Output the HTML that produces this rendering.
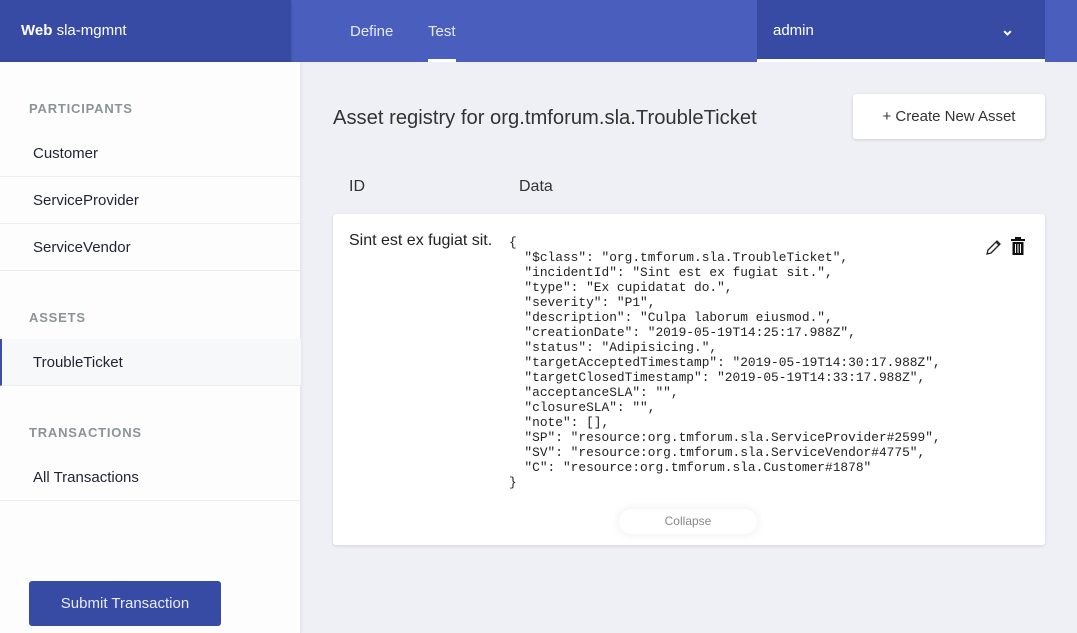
<!DOCTYPE html>
<html><head><meta charset="utf-8"><style>
*{margin:0;padding:0;box-sizing:border-box}
body{width:1077px;height:633px;overflow:hidden;background:#eff0f5;font-family:"Liberation Sans",sans-serif;position:relative;color:#1f2333}
.a{position:absolute}
.hdr{left:0;top:0;width:1077px;height:62px;background:#4a5fbd}
.side{left:0;top:62px;width:301px;height:571px;background:#fdfdfe;border-right:1px solid #e6e7ec;box-shadow:1px 0 3px rgba(0,0,0,.05)}
.lbl{font-size:13px;font-weight:bold;color:#8a9497;letter-spacing:.8px}
.item{left:0;width:301px;height:47px;border-bottom:1px solid #ebecf2;font-size:15px;padding:15px 0 0 33px;color:#1f2333}
pre{font-family:"Liberation Mono",monospace;font-size:12.85px;line-height:15px;color:#222}
</style></head><body>
<div class="a hdr"></div>
<div class="a" style="left:0;top:0;width:291px;height:62px;background:#374ba4;box-shadow:0 2px 3px rgba(0,0,0,.2)"></div>
<div class="a" style="left:21px;top:22px;color:#fff;font-size:15px"><b>Web</b> sla-mgmnt</div>
<div class="a" style="left:350px;top:23px;color:#e6e9f7;font-size:15px">Define</div>
<div class="a" style="left:428px;top:23px;color:#e6e9f7;font-size:15px">Test</div>
<div class="a" style="left:428px;top:59px;width:28px;height:3px;background:#fff"></div>
<div class="a" style="left:757px;top:0;width:288px;height:59px;background:#374ba4"></div>
<div class="a" style="left:757px;top:59px;width:288px;height:3px;background:#fff"></div>
<div class="a" style="left:773px;top:22px;color:#fff;font-size:15px">admin</div>
<svg class="a" style="left:1003px;top:30px" width="9" height="7"><path d="M1.2 1.2L4.5 4.5L7.8 1.2" stroke="#fff" stroke-width="2" fill="none"/></svg>

<div class="a side"></div>
<div class="a lbl" style="left:29px;top:101px">PARTICIPANTS</div>
<div class="a item" style="top:130px">Customer</div>
<div class="a item" style="top:177px">ServiceProvider</div>
<div class="a item" style="top:224px">ServiceVendor</div>
<div class="a lbl" style="left:29px;top:310px">ASSETS</div>
<div class="a item" style="top:339px;background:#f7f8f9;border-left:2px solid #3b4ea6;padding-left:31px">TroubleTicket</div>
<div class="a lbl" style="left:29px;top:425px">TRANSACTIONS</div>
<div class="a item" style="top:454px">All Transactions</div>
<div class="a" style="left:29px;top:581px;width:192px;height:45px;background:#374ba4;border-radius:3px;color:#e8ebf7;font-size:15px;text-align:center;line-height:45px">Submit Transaction</div>

<div class="a" style="left:333px;top:107px;font-size:20.2px;color:#333">Asset registry for org.tmforum.sla.TroubleTicket</div>
<div class="a" style="left:853px;top:94px;width:192px;height:45px;background:#fff;border-radius:3px;box-shadow:0 1px 3px rgba(0,0,0,.15);font-size:15px;text-align:center;line-height:45px;color:#333">+ Create New Asset</div>
<div class="a" style="left:349px;top:178px;font-size:16px;color:#333">ID</div>
<div class="a" style="left:519px;top:178px;font-size:16px;color:#333">Data</div>

<div class="a" style="left:333px;top:214px;width:712px;height:331px;background:#fff;border-radius:3px;box-shadow:0 1px 3px rgba(0,0,0,.12)"></div>
<div class="a" style="left:349px;top:232px;font-size:16px;color:#222">Sint est ex fugiat sit.</div>
<pre class="a" style="left:509px;top:235px">{
  "$class": "org.tmforum.sla.TroubleTicket",
  "incidentId": "Sint est ex fugiat sit.",
  "type": "Ex cupidatat do.",
  "severity": "P1",
  "description": "Culpa laborum eiusmod.",
  "creationDate": "2019-05-19T14:25:17.988Z",
  "status": "Adipisicing.",
  "targetAcceptedTimestamp": "2019-05-19T14:30:17.988Z",
  "targetClosedTimestamp": "2019-05-19T14:33:17.988Z",
  "acceptanceSLA": "",
  "closureSLA": "",
  "note": [],
  "SP": "resource:org.tmforum.sla.ServiceProvider#2599",
  "SV": "resource:org.tmforum.sla.ServiceVendor#4775",
  "C": "resource:org.tmforum.sla.Customer#1878"
}</pre>
<svg class="a" style="left:985px;top:238px" width="18" height="18"><path d="M2 16L3 12L12 3L15 6L6 15Z M11 4L14 7" stroke="#222" stroke-width="1.3" fill="none"/></svg>
<svg class="a" style="left:1010px;top:237px" width="16" height="19"><rect x="1" y="2" width="14" height="2" fill="#111"/><rect x="5" y="0" width="6" height="2" fill="#111"/><path d="M2.5 5H13.5V18H2.5Z" fill="#111"/><path d="M5.5 7V16M8 7V16M10.5 7V16" stroke="#fff" stroke-width="1"/></svg>
<div class="a" style="left:619px;top:509px;width:138px;height:25px;background:#fff;border-radius:13px;box-shadow:0 0 10px rgba(0,0,0,.08);font-size:12px;color:#888;text-align:center;line-height:25px">Collapse</div>
</body></html>
